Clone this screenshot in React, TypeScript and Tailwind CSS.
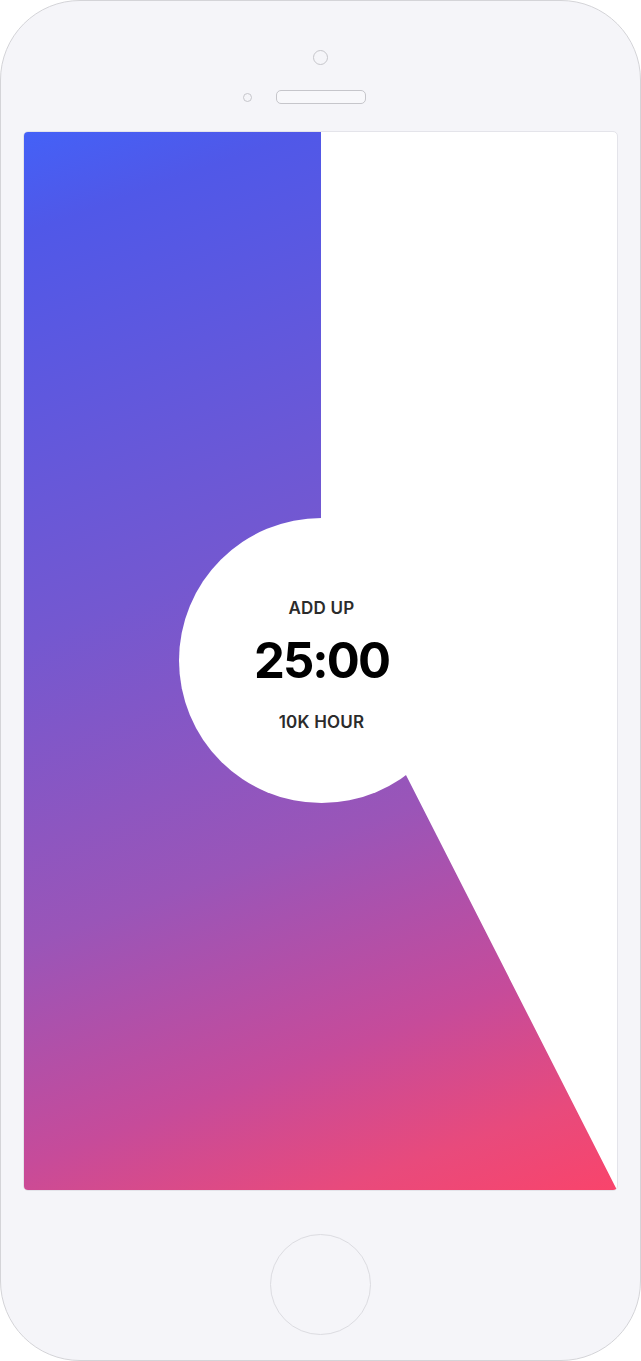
export default function App() {
	return (
		<div className="w-[641px] h-[1361px] bg-white" style={{ fontFamily: "Inter, 'Liberation Sans', sans-serif" }}>
			<div className="w-full h-full rounded-[80px] border border-[#d4d4d8] bg-[#f5f5f9] flex flex-col items-center">
				{/* camera */}
				<div className="mt-[49px] w-[15px] h-[15px] rounded-full border-[1.5px] border-[#c6c6cb]" />

				{/* sensor + speaker */}
				<div className="mt-[25px] flex items-center gap-[24px]">
					<div className="w-[9px] h-[9px] rounded-full border-[1.5px] border-[#c6c6cb]" />
					<div className="w-[90px] h-[14px] rounded-[5px] border-[1.5px] border-[#c6c6cb] bg-[#f8f8fb]" />
					<div className="w-[9px] h-[9px]" />
				</div>

				{/* screen */}
				<div className="mt-[27px] relative w-[595px] h-[1060px] rounded-[5px] border border-[#e4e4ea] bg-white overflow-hidden">
					<div className="absolute inset-0 bg-[linear-gradient(160deg,#4461f7_0%,#5058e8_8%,#7458d0_40%,#9a55b8_64%,#c64b9a_81%,#e84a7c_92%,#f9446b_100%)] [clip-path:polygon(0px_0px,297px_0px,297px_529px,324px_529px,594px_1060px,0px_1060px)]" />
					<div className="absolute left-[155px] top-[386px] w-[285px] h-[285px] rounded-full bg-white flex flex-col items-center">
						<div className="mt-[82px] text-[17px] font-semibold tracking-[0.2px] text-[#2b2b2b] leading-none">ADD UP</div>
						<div className="mt-[19px] text-[49px] font-bold text-black leading-none tracking-[-1.9px]">25:00</div>
						<div className="mt-[29px] text-[17px] font-semibold tracking-[0.2px] text-[#2b2b2b] leading-none">10K HOUR</div>
					</div>
				</div>

				{/* home button */}
				<div className="mt-[43px] w-[101px] h-[101px] rounded-full border-[1.5px] border-[#dcdce1]" />
			</div>
		</div>
	);
}
